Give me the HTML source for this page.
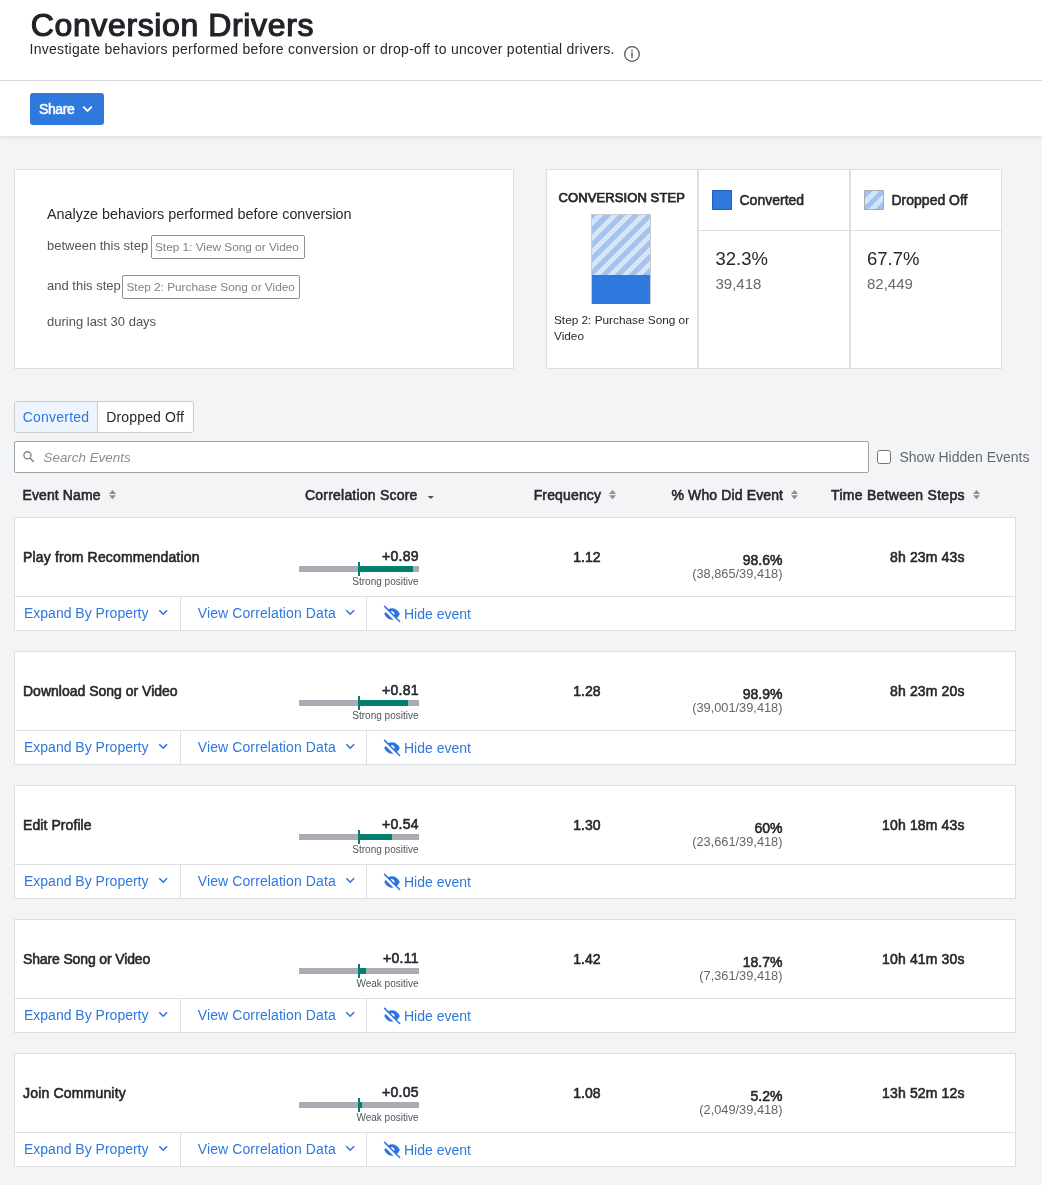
<!DOCTYPE html>
<html><head><meta charset="utf-8"><title>Conversion Drivers</title>
<style>
html,body{margin:0;padding:0;}
body{will-change:transform;width:1042px;height:1185px;position:relative;overflow:hidden;background:#f3f4f6;font-family:"Liberation Sans",sans-serif;}
.t{position:absolute;line-height:1;white-space:nowrap;}
.a{position:absolute;box-sizing:border-box;}
svg{position:absolute;overflow:visible;}
</style></head><body>
<div class="a" style="left:0;top:0;width:1042px;height:136px;background:#fff;box-shadow:0 1px 4px rgba(0,0,0,0.12);"></div>
<div class="a" style="left:0px;top:80px;width:1042px;height:1px;background:#d6d8db;"></div>
<div class="t" style="top:8.81px;font-size:32px;color:#202328;-webkit-text-stroke:1.15px #202328;letter-spacing:0.62px;left:30.8px;">Conversion Drivers</div>
<div class="t" style="top:41.65px;font-size:14px;color:#25282d;letter-spacing:0.285px;left:29.5px;">Investigate behaviors performed before conversion or drop-off to uncover potential drivers.</div>
<svg style="left:624px;top:46px" width="16" height="16" viewBox="0 0 16 16"><circle cx="8" cy="8" r="7.3" fill="none" stroke="#50545b" stroke-width="1.3"/><circle cx="8" cy="4.6" r="0.9" fill="#50545b"/><rect x="7.35" y="6.3" width="1.3" height="5.9" fill="#50545b"/></svg>
<div class="a" style="left:30px;top:93px;width:74px;height:32px;background:#2e78de;border-radius:3px;"></div>
<div class="t" style="top:102.05px;font-size:14px;color:#fff;-webkit-text-stroke:0.5px #fff;letter-spacing:-0.35px;left:38.9px;">Share</div>
<svg style="left:82px;top:105px" width="11" height="8" viewBox="0 0 11 8"><path d="M1.2 1.6 L5.5 5.9 L9.8 1.6" fill="none" stroke="#fff" stroke-width="1.8"/></svg>
<div class="a" style="left:14px;top:169px;width:500px;height:200px;background:#fff;border:1px solid #dcdee1;"></div>
<div class="t" style="top:206.85px;font-size:14.35px;color:#25282d;left:47px;">Analyze behaviors performed before conversion</div>
<div class="t" style="top:239.3px;font-size:13px;color:#50545b;left:47px;">between this step</div>
<div class="a" style="left:151px;top:235px;width:154px;height:24px;background:#fff;border:1px solid #8d9198;border-radius:2px;"></div>
<div class="t" style="top:241.51px;font-size:11.8px;color:#7d8289;left:155px;">Step 1: View Song or Video</div>
<div class="t" style="top:279.2px;font-size:13px;color:#50545b;left:47px;">and this step</div>
<div class="a" style="left:122px;top:275px;width:178px;height:24px;background:#fff;border:1px solid #8d9198;border-radius:2px;"></div>
<div class="t" style="top:281.51px;font-size:11.8px;color:#7d8289;left:126.5px;">Step 2: Purchase Song or Video</div>
<div class="t" style="top:314.5px;font-size:13px;color:#50545b;left:47px;">during last 30 days</div>
<div class="a" style="left:546px;top:169px;width:152px;height:200px;background:#fff;border:1px solid #dcdee1;"></div>
<div class="a" style="left:698px;top:169px;width:152px;height:200px;background:#fff;border:1px solid #dcdee1;"></div>
<div class="a" style="left:850px;top:169px;width:152px;height:200px;background:#fff;border:1px solid #dcdee1;"></div>
<div class="a" style="left:698px;top:230px;width:304px;height:1px;background:#dcdee1;"></div>
<div class="t" style="top:191.2px;font-size:13px;color:#25282d;-webkit-text-stroke:0.75px #25282d;letter-spacing:0.1px;left:558.5px;">CONVERSION STEP</div>
<div class="a" style="left:591px;top:214px;width:60px;height:90px;background:#fff;border:1px solid #c9cbcf;"></div>
<div class="a" style="left:592px;top:215px;width:58px;height:60px;background:repeating-linear-gradient(-45deg,#a4c2ef 0px,#a4c2ef 5px,#d6e4f9 5px,#d6e4f9 10px);"></div>
<div class="a" style="left:592px;top:275px;width:58px;height:29px;background:#2e78de;"></div>
<div class="t" style="top:314.51px;font-size:11.8px;color:#25282d;left:554px;">Step 2: Purchase Song or</div>
<div class="t" style="top:331.21px;font-size:11.8px;color:#25282d;left:554px;">Video</div>
<div class="a" style="left:712px;top:190px;width:20px;height:20px;background:#2e78de;border:1px solid #1f5fc8;"></div>
<div class="t" style="top:193.35px;font-size:14px;color:#25282d;-webkit-text-stroke:0.55px #25282d;left:739.5px;">Converted</div>
<div class="t" style="top:250.04px;font-size:18.5px;color:#25282d;left:715.5px;">32.3%</div>
<div class="t" style="top:275.6px;font-size:15px;color:#64686f;left:715.5px;">39,418</div>
<div class="a" style="left:864px;top:190px;width:20px;height:20px;background:repeating-linear-gradient(-45deg,#a4c2ef 0px,#a4c2ef 5px,#d6e4f9 5px,#d6e4f9 10px);border:1px solid #a9acb2;"></div>
<div class="t" style="top:193.35px;font-size:14px;color:#25282d;-webkit-text-stroke:0.55px #25282d;left:891.5px;">Dropped Off</div>
<div class="t" style="top:250.04px;font-size:18.5px;color:#25282d;left:867px;">67.7%</div>
<div class="t" style="top:275.6px;font-size:15px;color:#64686f;left:867px;">82,449</div>
<div class="a" style="left:14px;top:401px;width:180px;height:32px;background:#fff;border:1px solid #c9cbcf;border-radius:3px;"></div>
<div class="a" style="left:15px;top:402px;width:82px;height:30px;background:#edf4fd;border-radius:2px 0 0 2px;"></div>
<div class="a" style="left:97px;top:402px;width:1px;height:30px;background:#c9cbcf;"></div>
<div class="t" style="top:409.85px;font-size:14px;color:#2e78de;letter-spacing:0.2px;left:22.8px;">Converted</div>
<div class="t" style="top:409.85px;font-size:14px;color:#25282d;letter-spacing:0.15px;left:106.3px;">Dropped Off</div>
<div class="a" style="left:14px;top:441px;width:855px;height:32px;background:#fff;border:1px solid #9da1a8;border-radius:2px;"></div>
<svg style="left:22px;top:450px" width="14" height="14" viewBox="0 0 14 14"><circle cx="5.45" cy="5.3" r="3.55" fill="none" stroke="#7f838a" stroke-width="1.35"/><path d="M8.1 8.1 L11.8 12" stroke="#7f838a" stroke-width="1.5"/></svg>
<div class="t" style="top:450.66px;font-size:13.4px;color:#8a8e95;font-style:italic;left:43.5px;">Search Events</div>
<div class="a" style="left:877px;top:450px;width:14px;height:14px;background:#fff;border:1px solid #6f737a;border-radius:2.5px;"></div>
<div class="t" style="top:450.15px;font-size:14px;color:#64686f;left:899.5px;">Show Hidden Events</div>
<div class="t" style="top:488.25px;font-size:14px;color:#25282d;-webkit-text-stroke:0.59px #25282d;letter-spacing:0.1px;left:22.5px;">Event Name</div>
<svg style="left:109.1px;top:489px" width="8" height="11" viewBox="0 0 8 11"><path d="M3.5 0.9 L7 4.9 L0 4.9 Z M0 6.3 L7 6.3 L3.5 10.2 Z" fill="#8a8e95"/></svg>
<div class="t" style="top:488.25px;font-size:14px;color:#25282d;-webkit-text-stroke:0.59px #25282d;letter-spacing:0.21px;left:305px;">Correlation Score</div>
<div class="t" style="top:488.25px;font-size:14px;color:#25282d;-webkit-text-stroke:0.59px #25282d;letter-spacing:0.15px;right:440.85px;">Frequency</div>
<svg style="left:608.8px;top:489px" width="8" height="11" viewBox="0 0 8 11"><path d="M3.5 0.9 L7 4.9 L0 4.9 Z M0 6.3 L7 6.3 L3.5 10.2 Z" fill="#8a8e95"/></svg>
<div class="t" style="top:488.25px;font-size:14px;color:#25282d;-webkit-text-stroke:0.59px #25282d;letter-spacing:0.13px;right:258.87px;">% Who Did Event</div>
<svg style="left:791.1px;top:489px" width="8" height="11" viewBox="0 0 8 11"><path d="M3.5 0.9 L7 4.9 L0 4.9 Z M0 6.3 L7 6.3 L3.5 10.2 Z" fill="#8a8e95"/></svg>
<div class="t" style="top:488.25px;font-size:14px;color:#25282d;-webkit-text-stroke:0.59px #25282d;letter-spacing:0.28px;right:77.22px;">Time Between Steps</div>
<svg style="left:973.3px;top:489px" width="8" height="11" viewBox="0 0 8 11"><path d="M3.5 0.9 L7 4.9 L0 4.9 Z M0 6.3 L7 6.3 L3.5 10.2 Z" fill="#8a8e95"/></svg>
<svg style="left:427px;top:495px" width="8" height="5" viewBox="0 0 8 5"><path d="M0.6 0.9 L6.9 0.9 L3.75 4.1 Z" fill="#50545b"/></svg>
<div class="a" style="left:14px;top:517px;width:1002px;height:114px;background:#fff;border:1px solid #dcdee1;"></div>
<div class="a" style="left:15px;top:596px;width:1000px;height:1px;background:#dcdee1;"></div>
<div class="a" style="left:180px;top:597px;width:1px;height:33px;background:#dcdee1;"></div>
<div class="a" style="left:366px;top:597px;width:1px;height:33px;background:#dcdee1;"></div>
<div class="t" style="top:550.15px;font-size:14px;color:#25282d;-webkit-text-stroke:0.59px #25282d;letter-spacing:0.16px;left:23px;">Play from Recommendation</div>
<div class="t" style="top:548.95px;font-size:14px;color:#25282d;-webkit-text-stroke:0.59px #25282d;letter-spacing:0.25px;right:623.25px;">+0.89</div>
<div class="a" style="left:299px;top:566px;width:120px;height:6px;background:#a9acb2;"></div>
<div class="a" style="left:359px;top:566px;width:54px;height:6px;background:#037f6f;"></div>
<div class="a" style="left:358px;top:562px;width:2px;height:14px;background:#037f6f;"></div>
<div class="t" style="top:576.53px;font-size:10px;color:#50545b;right:623.5px;">Strong positive</div>
<div class="t" style="top:550.05px;font-size:14px;color:#25282d;-webkit-text-stroke:0.59px #25282d;right:441.5px;">1.12</div>
<div class="t" style="top:553.05px;font-size:14px;color:#25282d;-webkit-text-stroke:0.59px #25282d;right:259.5px;">98.6%</div>
<div class="t" style="top:567.76px;font-size:12.8px;color:#62666d;right:259.5px;">(38,865/39,418)</div>
<div class="t" style="top:549.95px;font-size:14px;color:#25282d;-webkit-text-stroke:0.59px #25282d;letter-spacing:0.15px;right:77.35px;">8h 23m 43s</div>
<div class="t" style="top:606.15px;font-size:14px;color:#2e78de;left:24px;">Expand By Property</div>
<svg style="left:158px;top:608px" width="11" height="8" viewBox="0 0 11 8"><path d="M1.3 2.3 L5.2 6.2 L9.1 2.3" fill="none" stroke="#2e74de" stroke-width="1.6"/></svg>
<div class="t" style="top:606.15px;font-size:14px;color:#2e78de;letter-spacing:0.1px;left:197.8px;">View Correlation Data</div>
<svg style="left:344.5px;top:608px" width="11" height="8" viewBox="0 0 11 8"><path d="M1.3 2.3 L5.2 6.2 L9.1 2.3" fill="none" stroke="#2e74de" stroke-width="1.6"/></svg>
<svg style="left:380px;top:602px" width="24" height="24" viewBox="0 0 24 24"><path d="M4.2 12 C6.5 7.8 9.2 6.2 12 6.2 C14.8 6.2 17.6 7.8 19.9 12 C17.6 16.2 14.8 17.8 12 17.8 C9.2 17.8 6.5 16.2 4.2 12 Z" fill="#2e74de"/><ellipse cx="12.8" cy="10.9" rx="2.3" ry="1.2" transform="rotate(42 12.8 10.9)" fill="#fff"/><path d="M3 5.2 L19.5 21.7" stroke="#fff" stroke-width="3"/><path d="M4.6 4.4 L19.6 19.5" stroke="#2e74de" stroke-width="1.5" stroke-linecap="round"/></svg>
<div class="t" style="top:606.85px;font-size:14px;color:#2e78de;left:404px;">Hide event</div>
<div class="a" style="left:14px;top:651px;width:1002px;height:114px;background:#fff;border:1px solid #dcdee1;"></div>
<div class="a" style="left:15px;top:730px;width:1000px;height:1px;background:#dcdee1;"></div>
<div class="a" style="left:180px;top:731px;width:1px;height:33px;background:#dcdee1;"></div>
<div class="a" style="left:366px;top:731px;width:1px;height:33px;background:#dcdee1;"></div>
<div class="t" style="top:684.15px;font-size:14px;color:#25282d;-webkit-text-stroke:0.59px #25282d;letter-spacing:0.0px;left:23px;">Download Song or Video</div>
<div class="t" style="top:682.95px;font-size:14px;color:#25282d;-webkit-text-stroke:0.59px #25282d;letter-spacing:0.25px;right:623.25px;">+0.81</div>
<div class="a" style="left:299px;top:700px;width:120px;height:6px;background:#a9acb2;"></div>
<div class="a" style="left:359px;top:700px;width:49px;height:6px;background:#037f6f;"></div>
<div class="a" style="left:358px;top:696px;width:2px;height:14px;background:#037f6f;"></div>
<div class="t" style="top:710.53px;font-size:10px;color:#50545b;right:623.5px;">Strong positive</div>
<div class="t" style="top:684.05px;font-size:14px;color:#25282d;-webkit-text-stroke:0.59px #25282d;right:441.5px;">1.28</div>
<div class="t" style="top:687.05px;font-size:14px;color:#25282d;-webkit-text-stroke:0.59px #25282d;right:259.5px;">98.9%</div>
<div class="t" style="top:701.76px;font-size:12.8px;color:#62666d;right:259.5px;">(39,001/39,418)</div>
<div class="t" style="top:683.95px;font-size:14px;color:#25282d;-webkit-text-stroke:0.59px #25282d;letter-spacing:0.15px;right:77.35px;">8h 23m 20s</div>
<div class="t" style="top:740.15px;font-size:14px;color:#2e78de;left:24px;">Expand By Property</div>
<svg style="left:158px;top:742px" width="11" height="8" viewBox="0 0 11 8"><path d="M1.3 2.3 L5.2 6.2 L9.1 2.3" fill="none" stroke="#2e74de" stroke-width="1.6"/></svg>
<div class="t" style="top:740.15px;font-size:14px;color:#2e78de;letter-spacing:0.1px;left:197.8px;">View Correlation Data</div>
<svg style="left:344.5px;top:742px" width="11" height="8" viewBox="0 0 11 8"><path d="M1.3 2.3 L5.2 6.2 L9.1 2.3" fill="none" stroke="#2e74de" stroke-width="1.6"/></svg>
<svg style="left:380px;top:736px" width="24" height="24" viewBox="0 0 24 24"><path d="M4.2 12 C6.5 7.8 9.2 6.2 12 6.2 C14.8 6.2 17.6 7.8 19.9 12 C17.6 16.2 14.8 17.8 12 17.8 C9.2 17.8 6.5 16.2 4.2 12 Z" fill="#2e74de"/><ellipse cx="12.8" cy="10.9" rx="2.3" ry="1.2" transform="rotate(42 12.8 10.9)" fill="#fff"/><path d="M3 5.2 L19.5 21.7" stroke="#fff" stroke-width="3"/><path d="M4.6 4.4 L19.6 19.5" stroke="#2e74de" stroke-width="1.5" stroke-linecap="round"/></svg>
<div class="t" style="top:740.85px;font-size:14px;color:#2e78de;left:404px;">Hide event</div>
<div class="a" style="left:14px;top:785px;width:1002px;height:114px;background:#fff;border:1px solid #dcdee1;"></div>
<div class="a" style="left:15px;top:864px;width:1000px;height:1px;background:#dcdee1;"></div>
<div class="a" style="left:180px;top:865px;width:1px;height:33px;background:#dcdee1;"></div>
<div class="a" style="left:366px;top:865px;width:1px;height:33px;background:#dcdee1;"></div>
<div class="t" style="top:818.15px;font-size:14px;color:#25282d;-webkit-text-stroke:0.59px #25282d;letter-spacing:0.08px;left:23px;">Edit Profile</div>
<div class="t" style="top:816.95px;font-size:14px;color:#25282d;-webkit-text-stroke:0.59px #25282d;letter-spacing:0.25px;right:623.25px;">+0.54</div>
<div class="a" style="left:299px;top:834px;width:120px;height:6px;background:#a9acb2;"></div>
<div class="a" style="left:359px;top:834px;width:33px;height:6px;background:#037f6f;"></div>
<div class="a" style="left:358px;top:830px;width:2px;height:14px;background:#037f6f;"></div>
<div class="t" style="top:844.53px;font-size:10px;color:#50545b;right:623.5px;">Strong positive</div>
<div class="t" style="top:818.05px;font-size:14px;color:#25282d;-webkit-text-stroke:0.59px #25282d;right:441.5px;">1.30</div>
<div class="t" style="top:821.05px;font-size:14px;color:#25282d;-webkit-text-stroke:0.59px #25282d;right:259.5px;">60%</div>
<div class="t" style="top:835.76px;font-size:12.8px;color:#62666d;right:259.5px;">(23,661/39,418)</div>
<div class="t" style="top:817.95px;font-size:14px;color:#25282d;-webkit-text-stroke:0.59px #25282d;letter-spacing:0.15px;right:77.35px;">10h 18m 43s</div>
<div class="t" style="top:874.15px;font-size:14px;color:#2e78de;left:24px;">Expand By Property</div>
<svg style="left:158px;top:876px" width="11" height="8" viewBox="0 0 11 8"><path d="M1.3 2.3 L5.2 6.2 L9.1 2.3" fill="none" stroke="#2e74de" stroke-width="1.6"/></svg>
<div class="t" style="top:874.15px;font-size:14px;color:#2e78de;letter-spacing:0.1px;left:197.8px;">View Correlation Data</div>
<svg style="left:344.5px;top:876px" width="11" height="8" viewBox="0 0 11 8"><path d="M1.3 2.3 L5.2 6.2 L9.1 2.3" fill="none" stroke="#2e74de" stroke-width="1.6"/></svg>
<svg style="left:380px;top:870px" width="24" height="24" viewBox="0 0 24 24"><path d="M4.2 12 C6.5 7.8 9.2 6.2 12 6.2 C14.8 6.2 17.6 7.8 19.9 12 C17.6 16.2 14.8 17.8 12 17.8 C9.2 17.8 6.5 16.2 4.2 12 Z" fill="#2e74de"/><ellipse cx="12.8" cy="10.9" rx="2.3" ry="1.2" transform="rotate(42 12.8 10.9)" fill="#fff"/><path d="M3 5.2 L19.5 21.7" stroke="#fff" stroke-width="3"/><path d="M4.6 4.4 L19.6 19.5" stroke="#2e74de" stroke-width="1.5" stroke-linecap="round"/></svg>
<div class="t" style="top:874.85px;font-size:14px;color:#2e78de;left:404px;">Hide event</div>
<div class="a" style="left:14px;top:919px;width:1002px;height:114px;background:#fff;border:1px solid #dcdee1;"></div>
<div class="a" style="left:15px;top:998px;width:1000px;height:1px;background:#dcdee1;"></div>
<div class="a" style="left:180px;top:999px;width:1px;height:33px;background:#dcdee1;"></div>
<div class="a" style="left:366px;top:999px;width:1px;height:33px;background:#dcdee1;"></div>
<div class="t" style="top:952.15px;font-size:14px;color:#25282d;-webkit-text-stroke:0.59px #25282d;letter-spacing:-0.14px;left:23px;">Share Song or Video</div>
<div class="t" style="top:950.95px;font-size:14px;color:#25282d;-webkit-text-stroke:0.59px #25282d;letter-spacing:0.25px;right:623.25px;">+0.11</div>
<div class="a" style="left:299px;top:968px;width:120px;height:6px;background:#a9acb2;"></div>
<div class="a" style="left:359px;top:968px;width:7px;height:6px;background:#037f6f;"></div>
<div class="a" style="left:358px;top:964px;width:2px;height:14px;background:#037f6f;"></div>
<div class="t" style="top:978.53px;font-size:10px;color:#50545b;right:623.5px;">Weak positive</div>
<div class="t" style="top:952.05px;font-size:14px;color:#25282d;-webkit-text-stroke:0.59px #25282d;right:441.5px;">1.42</div>
<div class="t" style="top:955.05px;font-size:14px;color:#25282d;-webkit-text-stroke:0.59px #25282d;right:259.5px;">18.7%</div>
<div class="t" style="top:969.76px;font-size:12.8px;color:#62666d;right:259.5px;">(7,361/39,418)</div>
<div class="t" style="top:951.95px;font-size:14px;color:#25282d;-webkit-text-stroke:0.59px #25282d;letter-spacing:0.15px;right:77.35px;">10h 41m 30s</div>
<div class="t" style="top:1008.15px;font-size:14px;color:#2e78de;left:24px;">Expand By Property</div>
<svg style="left:158px;top:1010px" width="11" height="8" viewBox="0 0 11 8"><path d="M1.3 2.3 L5.2 6.2 L9.1 2.3" fill="none" stroke="#2e74de" stroke-width="1.6"/></svg>
<div class="t" style="top:1008.15px;font-size:14px;color:#2e78de;letter-spacing:0.1px;left:197.8px;">View Correlation Data</div>
<svg style="left:344.5px;top:1010px" width="11" height="8" viewBox="0 0 11 8"><path d="M1.3 2.3 L5.2 6.2 L9.1 2.3" fill="none" stroke="#2e74de" stroke-width="1.6"/></svg>
<svg style="left:380px;top:1004px" width="24" height="24" viewBox="0 0 24 24"><path d="M4.2 12 C6.5 7.8 9.2 6.2 12 6.2 C14.8 6.2 17.6 7.8 19.9 12 C17.6 16.2 14.8 17.8 12 17.8 C9.2 17.8 6.5 16.2 4.2 12 Z" fill="#2e74de"/><ellipse cx="12.8" cy="10.9" rx="2.3" ry="1.2" transform="rotate(42 12.8 10.9)" fill="#fff"/><path d="M3 5.2 L19.5 21.7" stroke="#fff" stroke-width="3"/><path d="M4.6 4.4 L19.6 19.5" stroke="#2e74de" stroke-width="1.5" stroke-linecap="round"/></svg>
<div class="t" style="top:1008.85px;font-size:14px;color:#2e78de;left:404px;">Hide event</div>
<div class="a" style="left:14px;top:1053px;width:1002px;height:114px;background:#fff;border:1px solid #dcdee1;"></div>
<div class="a" style="left:15px;top:1132px;width:1000px;height:1px;background:#dcdee1;"></div>
<div class="a" style="left:180px;top:1133px;width:1px;height:33px;background:#dcdee1;"></div>
<div class="a" style="left:366px;top:1133px;width:1px;height:33px;background:#dcdee1;"></div>
<div class="t" style="top:1086.15px;font-size:14px;color:#25282d;-webkit-text-stroke:0.59px #25282d;letter-spacing:0.18px;left:23px;">Join Community</div>
<div class="t" style="top:1084.95px;font-size:14px;color:#25282d;-webkit-text-stroke:0.59px #25282d;letter-spacing:0.25px;right:623.25px;">+0.05</div>
<div class="a" style="left:299px;top:1102px;width:120px;height:6px;background:#a9acb2;"></div>
<div class="a" style="left:359px;top:1102px;width:3px;height:6px;background:#037f6f;"></div>
<div class="a" style="left:358px;top:1098px;width:2px;height:14px;background:#037f6f;"></div>
<div class="t" style="top:1112.54px;font-size:10px;color:#50545b;right:623.5px;">Weak positive</div>
<div class="t" style="top:1086.05px;font-size:14px;color:#25282d;-webkit-text-stroke:0.59px #25282d;right:441.5px;">1.08</div>
<div class="t" style="top:1089.05px;font-size:14px;color:#25282d;-webkit-text-stroke:0.59px #25282d;right:259.5px;">5.2%</div>
<div class="t" style="top:1103.76px;font-size:12.8px;color:#62666d;right:259.5px;">(2,049/39,418)</div>
<div class="t" style="top:1085.95px;font-size:14px;color:#25282d;-webkit-text-stroke:0.59px #25282d;letter-spacing:0.15px;right:77.35px;">13h 52m 12s</div>
<div class="t" style="top:1142.15px;font-size:14px;color:#2e78de;left:24px;">Expand By Property</div>
<svg style="left:158px;top:1144px" width="11" height="8" viewBox="0 0 11 8"><path d="M1.3 2.3 L5.2 6.2 L9.1 2.3" fill="none" stroke="#2e74de" stroke-width="1.6"/></svg>
<div class="t" style="top:1142.15px;font-size:14px;color:#2e78de;letter-spacing:0.1px;left:197.8px;">View Correlation Data</div>
<svg style="left:344.5px;top:1144px" width="11" height="8" viewBox="0 0 11 8"><path d="M1.3 2.3 L5.2 6.2 L9.1 2.3" fill="none" stroke="#2e74de" stroke-width="1.6"/></svg>
<svg style="left:380px;top:1138px" width="24" height="24" viewBox="0 0 24 24"><path d="M4.2 12 C6.5 7.8 9.2 6.2 12 6.2 C14.8 6.2 17.6 7.8 19.9 12 C17.6 16.2 14.8 17.8 12 17.8 C9.2 17.8 6.5 16.2 4.2 12 Z" fill="#2e74de"/><ellipse cx="12.8" cy="10.9" rx="2.3" ry="1.2" transform="rotate(42 12.8 10.9)" fill="#fff"/><path d="M3 5.2 L19.5 21.7" stroke="#fff" stroke-width="3"/><path d="M4.6 4.4 L19.6 19.5" stroke="#2e74de" stroke-width="1.5" stroke-linecap="round"/></svg>
<div class="t" style="top:1142.85px;font-size:14px;color:#2e78de;left:404px;">Hide event</div>
</body></html>
